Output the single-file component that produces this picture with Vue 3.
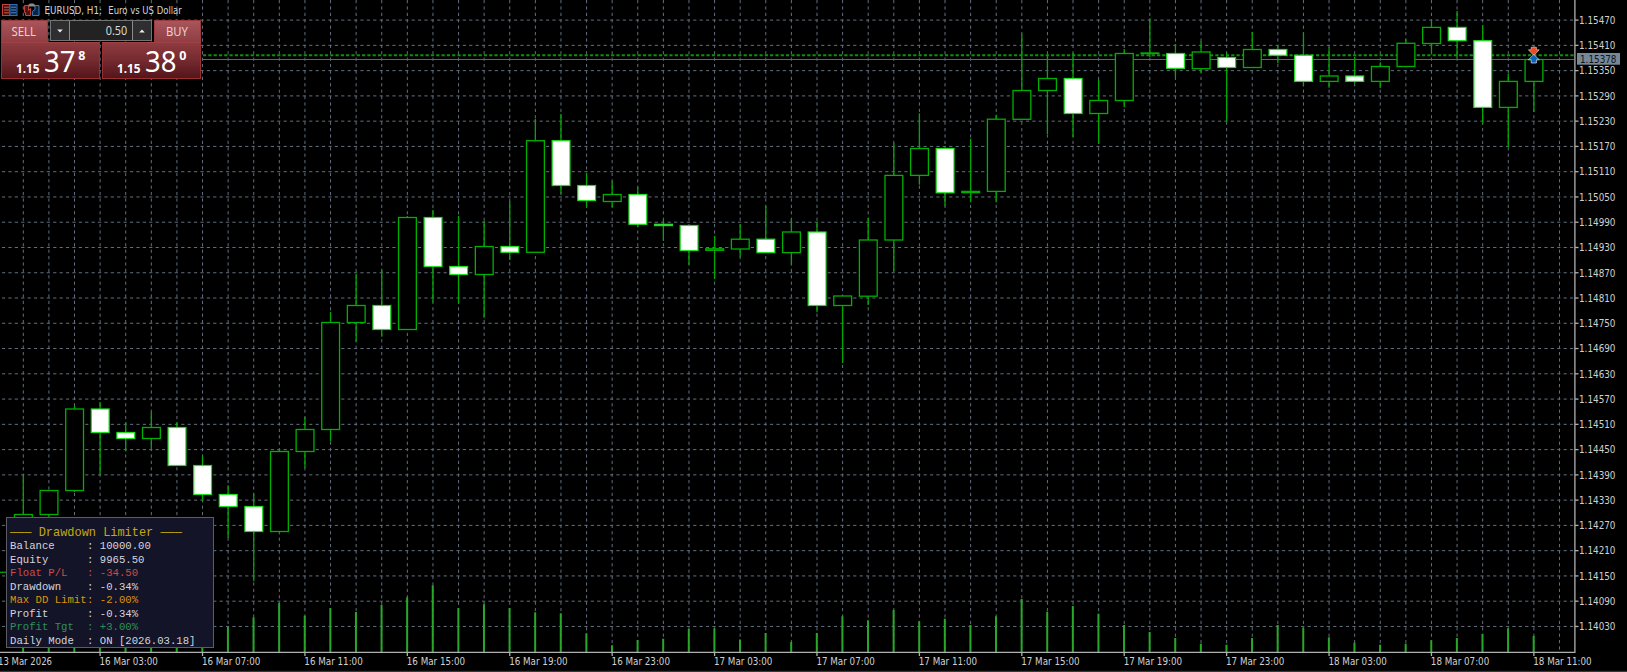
<script setup>
const x = (i) => 23.3 + 25.603 * i
// [high, bodyTop, bodyBottom, low, filled, volumeTop]
const candles = [
  [475, 514.5, 530, 530, 0, 640], [490, 490.5, 514.5, 520, 0, 640], [406, 409, 490.5, 492, 0, 640],
  [402, 409, 432.5, 474.3, 1, 640], [422.3, 432.5, 438.5, 451.3, 1, 640], [412, 427.5, 438.5, 448.3, 0, 640],
  [422.3, 427.5, 465.5, 466, 1, 640], [456, 465.5, 494.5, 500.7, 1, 640], [485.3, 494.5, 506.5, 538, 1, 627],
  [493.3, 506.5, 531.5, 581.3, 1, 617.3], [449, 451.5, 531.5, 532, 0, 603], [417, 429.5, 451.5, 468, 0, 615.7],
  [312, 322.5, 429.5, 441.3, 0, 608], [274, 305.5, 322.5, 341.7, 0, 612], [269.5, 305.5, 329.5, 336.7, 1, 605],
  [216, 217.5, 329.5, 330, 0, 597.3], [210, 217.5, 266.5, 302.3, 1, 585.3], [216, 266.5, 274.5, 303, 1, 608],
  [221, 246.5, 274.5, 317.7, 0, 604.3], [201, 246.5, 252.3, 260, 1, 608], [119, 140.7, 252.3, 252.3, 0, 612.3],
  [114, 140.7, 185.5, 193.7, 1, 613.3], [173.3, 185.5, 200.5, 206.7, 1, 633.3], [181, 194.5, 201.5, 207, 0, 645.3],
  [187, 194.5, 224.3, 227.3, 1, 640], [220, 224.3, 225.6, 241, 1, 638.7], [225, 225.5, 250.5, 264.7, 1, 629],
  [236, 248.8, 250.3, 279, 0, 628.3], [224.3, 239.2, 249, 256.7, 0, 639.5], [205.7, 239.2, 252.6, 252.6, 1, 633],
  [219, 232, 252.6, 264.7, 0, 642], [222, 232, 305.5, 312.3, 1, 633], [296, 296, 305.5, 363, 0, 616.3],
  [218, 240, 296.2, 305, 0, 620.3], [143.3, 175.4, 240, 271.3, 0, 610], [113.3, 148.5, 175.4, 184.7, 0, 621.3],
  [148, 148.5, 192.8, 206, 1, 618.7], [138.7, 191.4, 192.6, 202.3, 0, 625], [114.7, 119.2, 191.4, 202.3, 0, 616.3],
  [34.2, 90.5, 119.3, 119.3, 0, 599], [55, 78.5, 90.5, 134, 0, 611.7], [52.7, 78.5, 113.5, 137, 1, 606],
  [80, 100.5, 113.5, 144, 0, 613.7], [49, 53.5, 100.5, 107.3, 0, 625], [18.3, 53, 53.5, 57, 0, 632],
  [44, 53.5, 68.3, 77.3, 1, 638], [41, 52, 68.7, 72.7, 0, 643.7], [52.7, 57.5, 67.5, 121.3, 1, 644.7],
  [32, 49.5, 67.5, 67.5, 0, 638], [45.7, 49.5, 55.3, 63.3, 1, 625], [32.7, 55.3, 81.4, 86.3, 1, 627.7],
  [47.3, 76, 81.4, 87.7, 0, 637.3], [56.7, 76, 81.4, 83.3, 1, 642.7], [62.3, 66.5, 81.4, 88, 0, 644.7],
  [39.3, 43.3, 66.5, 66.5, 0, 643.7], [21.3, 27.4, 43.5, 53.3, 0, 640.3], [11, 27.4, 40.7, 58.3, 1, 638],
  [25, 40.7, 107.4, 124.3, 1, 634], [74, 81.4, 107.4, 147, 0, 628.3], [59.3, 59.5, 81.4, 112, 0, 636],
]
const rows = Array.from({ length: 25 }, (_, k) => ({ y: 20.1 + 25.265 * k, t: (1.1547 - 0.0006 * k).toFixed(5) }))
const times = ['16 Mar 03:00', '16 Mar 07:00', '16 Mar 11:00', '16 Mar 15:00', '16 Mar 19:00', '16 Mar 23:00', '17 Mar 03:00', '17 Mar 07:00', '17 Mar 11:00', '17 Mar 15:00', '17 Mar 19:00', '17 Mar 23:00', '18 Mar 03:00', '18 Mar 07:00', '18 Mar 11:00']
const stats = [
  { label: 'Balance', value: '10000.00', c: '' },
  { label: 'Equity', value: '9965.50', c: '' },
  { label: 'Float P/L', value: '-34.50', c: 'red' },
  { label: 'Drawdown', value: '-0.34%', c: '' },
  { label: 'Max DD Limit', value: '-2.00%', c: 'orange' },
  { label: 'Profit', value: '-0.34%', c: '' },
  { label: 'Profit Tgt', value: '+3.00%', c: 'green' },
  { label: 'Daily Mode', value: 'ON [2026.03.18]', c: '' },
]
const quotes = [{ side: 'sell', big: '37', sup: '8' }, { side: 'buy', big: '38', sup: '0' }]
</script>

<template>
  <div class="terminal">
    <svg class="chart" width="1627" height="672" viewBox="0 0 1627 672">
      <g class="grid">
        <line v-for="r in rows" :key="r.t" x1="2" x2="1574" :y1="r.y" :y2="r.y" />
        <line v-for="i in 61" :key="i" :x1="x(i - 1)" :x2="x(i - 1)" y1="0" y2="652" />
      </g>
      <line class="ask" x1="203" x2="1574" y1="55.3" y2="55.3" />
      <line class="bid" x1="203" x2="1574" y1="59.5" y2="59.5" />
      <line class="wick" x1="0" x2="7" y1="572.3" y2="572.3" />
      <g v-for="(c, i) in candles" :key="i">
        <line class="vol" :x1="x(i) - 0.2" :x2="x(i) - 0.2" :y1="c[5]" y2="652" />
        <line class="wick" :x1="x(i)" :x2="x(i)" :y1="c[0]" :y2="c[3]" />
        <rect :class="c[4] ? 'down' : 'up'" :x="x(i) - 8.8" :y="c[1]" width="17.8" :height="c[2] - c[1]" />
      </g>
      <g class="axis">
        <path d="M0 652.3H1575M1574.9 0V653" />
        <path v-for="r in rows" :key="r.t" :d="`M1575 ${r.y}h3.5`" />
        <path v-for="(t, i) in times" :key="t" :d="`M${x(3 + 4 * i)} 652v4`" />
      </g>
      <g class="labels">
        <text v-for="r in rows" :key="r.t" x="1579" :y="r.y + 3.8" textLength="36.5" lengthAdjust="spacingAndGlyphs">{{ r.t }}</text>
        <text x="-2" y="664.8" textLength="54" lengthAdjust="spacingAndGlyphs">13 Mar 2026</text>
        <text v-for="(t, i) in times" :key="t" :x="x(3 + 4 * i) - 0.6" y="664.8" textLength="58.4" lengthAdjust="spacingAndGlyphs">{{ t }}</text>
      </g>
      <rect x="1577" y="53" width="43" height="11.7" fill="#778899" />
      <text class="cur" x="1580" y="63" textLength="36.5" lengthAdjust="spacingAndGlyphs">1.15378</text>
      <path d="M1531.2 47.2h5.2v2.6h2.8l-5.4 5.8-5.4-5.8h2.8z" fill="#ea4b25" stroke="#f2d8d0" stroke-width=".6" />
      <path d="M1533.8 54.4l5.4 5.4h-2.8v3.2h-5.2v-3.2h-2.8z" fill="#0c62b8" stroke="#d8e4f2" stroke-width=".7" />
      <rect x="0" y="670.8" width="1627" height="1.2" fill="#3a3639" />
    </svg>

    <div class="trade">
      <header class="title">
        <svg width="17" height="14" viewBox="0 0 17 14">
          <rect x=".5" y="1.5" width="7.5" height="11" fill="#3a1212" stroke="#c4453c" />
          <rect x="8" y="1.5" width="7" height="11" fill="#0c2444" stroke="#3270b8" />
          <path d="M2 4.2h5M2 7h5M2 9.8h5" stroke="#d0584e" />
          <path d="M9 4.2h5M9 7h5M9 9.8h5" stroke="#4a88cc" />
        </svg>
        <svg class="second" width="17" height="14" viewBox="0 0 17 14">
          <path d="M.6 2.5h4v5l2-2V12.5H1.6V9.5H.6z" fill="#4a1512" stroke="#cc483e" />
          <path d="M15 2.5h-4v4l-2.6 1.8v4.2H15z" fill="#0c2444" stroke="#3a7cc4" />
          <path d="M4.5 3.4V1.6L6 .6h3.5L11 2v1.4z" fill="#8c8c8c" />
        </svg>
        <svg class="name" width="142" height="16" viewBox="0 0 142 16">
          <text x=".5" y="13.7" textLength="57.5" lengthAdjust="spacingAndGlyphs">EURUSD, H1:</text>
          <text x="64.3" y="13.7" textLength="73.5" lengthAdjust="spacingAndGlyphs">Euro vs US Dollar</text>
        </svg>
      </header>

      <div class="deal">
        <div class="tab">
          <svg width="47" height="21"><text x="10.5" y="15.8" textLength="24.5" lengthAdjust="spacingAndGlyphs">SELL</text></svg>
        </div>
        <div class="lots">
          <span class="spin"><svg width="6" height="4" viewBox="0 0 6 4"><path d="M.2.4h5.6L3 3.6z" fill="#eee" /></svg></span>
          <span class="amount"><svg width="62" height="19"><text x="35.7" y="13.8" textLength="21.5" lengthAdjust="spacingAndGlyphs">0.50</text></svg></span>
          <span class="spin"><svg width="6" height="4" viewBox="0 0 6 4"><path d="M.2 3.6h5.6L3 .4z" fill="#eee" /></svg></span>
        </div>
        <div class="tab">
          <svg width="47" height="21"><text x="12" y="15.8" textLength="22" lengthAdjust="spacingAndGlyphs">BUY</text></svg>
        </div>
      </div>
      <div class="prices">
        <div v-for="q in quotes" :key="q.side" class="quote" :class="q.side">
          <svg width="97" height="36" viewBox="0 0 97 36">
            <text class="base" x="14" y="29.5" textLength="23.5" lengthAdjust="spacingAndGlyphs">1.15</text>
            <text class="big" x="42" y="29.3" textLength="31.5" lengthAdjust="spacingAndGlyphs">{{ q.big }}</text>
            <text class="sup" x="76.3" y="16.5">{{ q.sup }}</text>
          </svg>
        </div>
      </div>
    </div>

    <section class="panel">
      <h2>─── Drawdown Limiter ───</h2>
      <div v-for="s in stats" :key="s.label" class="row" :class="s.c">
        <span class="k">{{ s.label }}</span><span class="sep">:</span><span>{{ s.value }}</span>
      </div>
    </section>
  </div>
</template>

<style scoped>
.terminal { position: relative; width: 1627px; height: 672px; background: #000; overflow: hidden; }
svg { display: block; }
.grid line { stroke: #62707e; stroke-width: 1; stroke-dasharray: 3.2 3.2; }
.ask { stroke: #0c900c; stroke-width: 1.9; stroke-dasharray: 3.2 2.1; }
.bid { stroke: #5e6870; stroke-width: 1.2; }
.wick { stroke: #00a800; stroke-width: 1.3; }
.vol { stroke: #28a828; stroke-width: 2; }
.up { fill: #000; stroke: #00b000; stroke-width: 1.3; }
.down { fill: #fff; stroke: #1fe01f; stroke-width: 1.2; }
.axis path { fill: none; stroke: #b0b0b0; stroke-width: 1.3; }
.labels text, .cur, .name text { font-family: "DejaVu Sans Condensed", "DejaVu Sans", sans-serif; font-size: 10px; fill: #d0d0d0; }
.cur { fill: #10141a; }

.trade { position: absolute; left: 0; top: 0; width: 202px; }
.title { display: flex; height: 20px; padding-left: 2px; }
.title > svg { flex: none; margin-top: 2.5px; }
.title > .second { margin-left: 5px; }
.title > .name { margin: 0 0 0 3px; }
.name text { font-size: 10.5px; fill: #d4d4d4; }
.deal { display: flex; height: 22px; gap: 2px; padding-left: 1px; }
.tab { width: 47px; height: 22px; box-sizing: border-box; background: linear-gradient(#a8555b, #8f3e42); border: 1px solid #9a3a3c; border-bottom: 0; }
.tab svg { margin: -1px 0 0 -1px; }
.tab text { font: 13px "Noto Sans", sans-serif; fill: #efd0cf; }
.tab::after { content: ""; display: block; height: 1px; margin: 1px 2px 0; background: #d88f8c; }
.lots { display: flex; width: 102px; height: 21px; box-sizing: border-box; border: 1px solid #737373; background: #222; }
.spin { display: flex; flex: 1; align-items: center; justify-content: center; background: #2e2e30; }
.amount { width: 62px; border: solid #8a8a8a; border-width: 0 1px; }
.amount text { font: 12.5px "Noto Sans", sans-serif; fill: #d8d8d8; }
.prices { display: flex; gap: 2px; padding-left: 1px; }
.quote { width: 99px; height: 37px; box-sizing: border-box; border: 1px solid #9a2e30; border-top-color: #a24144; background: linear-gradient(#8d3b40, #742a2f 50%, #54151a); }
.quote text { fill: #fff; font-family: "Noto Sans", sans-serif; }
.quote .base { font-size: 12px; font-weight: 700; }
.quote .big { font-size: 28.5px; }
.quote .sup { font-size: 12.5px; font-weight: 700; }

.panel { position: absolute; left: 6px; top: 517px; width: 208px; height: 131px; box-sizing: border-box; border: 1px solid #5c5c64; background: #141428; padding: 8.6px 0 0 3px; font: 10.63px/13.63px "Liberation Mono", monospace; color: #d4d4dc; white-space: pre; }
h2 { margin: 0; font-size: 11.95px; line-height: 13.6px; color: #c4a80c; font-weight: 400; }
.row { display: flex; height: 13.55px; }
.k { width: 77px; }
.sep { width: 12.8px; }
.red { color: #cc4c44; }
.orange { color: #dc9408; }
.green { color: #2e9058; }
</style>
